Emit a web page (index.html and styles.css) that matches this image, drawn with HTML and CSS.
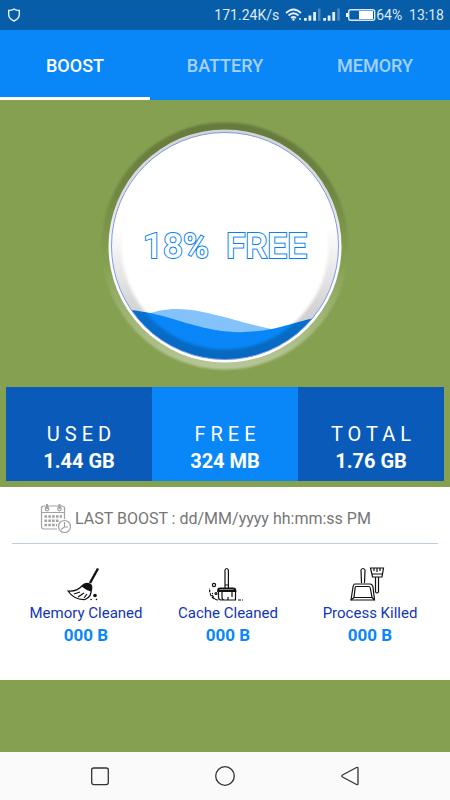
FILE: index.html
```html
<!DOCTYPE html>
<html lang="en">
<head>
<meta charset="utf-8">
<meta name="viewport" content="width=device-width, initial-scale=1">
<title>Boost</title>
<link rel="stylesheet" href="styles.css">
</head>
<body>
<header class="status">
  <svg class="shield" viewBox="0 0 14 14" aria-hidden="true"><path d="M7 1Q9.500 2.600 12.300 2.400V7Q12 10.800 7 13Q2 10.800 1.700 7V2.400Q4.500 2.600 7 1Z"/></svg>
  <span class="speed">171.24K/s</span>
  <svg class="signals" viewBox="0 0 56 16" aria-hidden="true">
    <g class="wifi"><path d="M1 6Q8.500-1 16 6M3.500 8.500Q8.500 4 13.500 8.500M6 11Q8.500 9 11 11"/><circle cx="8.500" cy="12.500" r="1.200"/><circle cx="15" cy="12" r="1"/></g>
    <g class="bars"><path d="M19 11h2.800v2.800h-2.800zM23.500 8.500h2.800v5.300h-2.800zM28.200 5h2.800v8.800h-2.800zM38.200 11h2.800v2.800h-2.800zM42.700 8.500h2.800v5.300h-2.800zM47.300 5h2.800v8.800h-2.800z"/><path class="dim" d="M33 1.500h2.500v12.300h-2.500zM52.300 1.500h2.500v12.300h-2.500z"/></g>
  </svg>
  <svg class="battery" viewBox="0 0 31 16" aria-hidden="true"><rect class="case" x="3.700" y="2.700" width="26" height="10.600" rx="2"/><path class="fill" d="M1 6h2v4H1zM14 4h14v8H14z"/></svg>
  <span class="time">64%&nbsp; 13:18</span>
</header>
<nav class="tabs">
  <button class="tab active" type="button">BOOST</button>
  <button class="tab" type="button">BATTERY</button>
  <button class="tab" type="button">MEMORY</button>
</nav>
<main>
  <section class="gauge">
    <svg viewBox="0 0 250 250" role="img" aria-label="18% free">
      <defs>
        <linearGradient id="halo" x1="0" y1="0" x2="0" y2="1">
          <stop offset="0" stop-color="#000" stop-opacity=".24"/><stop offset=".25" stop-color="#000" stop-opacity=".17"/><stop offset=".55" stop-color="#000" stop-opacity="0"/><stop offset=".56" stop-color="#fff" stop-opacity="0"/><stop offset="1" stop-color="#fff" stop-opacity=".42"/>
        </linearGradient>
        <linearGradient id="rim" x1="0" y1="0" x2="0" y2="1">
          <stop offset="0" stop-color="#d4d4d4"/><stop offset=".3" stop-color="#dedede"/><stop offset=".55" stop-color="#fff"/>
        </linearGradient>
        <linearGradient id="shade" x1="0" y1="0" x2="0" y2="1">
          <stop offset=".42" stop-color="#000" stop-opacity="0"/><stop offset=".78" stop-color="#000" stop-opacity=".17"/><stop offset="1" stop-color="#000" stop-opacity=".23"/>
        </linearGradient>
        <filter id="soft"><feGaussianBlur stdDeviation="1"/></filter>
        <filter id="inner"><feGaussianBlur stdDeviation="1.500"/></filter>
        <clipPath id="disc"><circle cx="125" cy="125" r="113.500"/></clipPath>
      </defs>
      <circle cx="125" cy="125" r="123.500" fill="url(#halo)" filter="url(#soft)"/>
      <circle cx="125" cy="125" r="116.500" fill="url(#rim)"/>
      <circle cx="125" cy="125" r="113.500" fill="#fff"/>
      <g clip-path="url(#disc)">
        <path fill="#84c2fb" d="M40 196C72 182 96 189 128 197Q155 205 180 210L160 225H60Z"/>
        <path fill="#0987f8" d="M5 188C45 187 68 197 90 203C118 211 140 214 172 208C190 204 205 198 245 190V250H5Z"/>
        <circle cx="125" cy="125" r="111" fill="none" stroke="url(#shade)" stroke-width="15" filter="url(#inner)"/>
      </g>
      <circle class="line" cx="125" cy="125" r="113.500"/>
      <text class="percent" x="125" y="137">18%  FREE</text>
    </svg>
  </section>
  <section class="stats">
    <div class="stat"><span>USED</span><strong>1.44 GB</strong></div>
    <div class="stat free"><span>FREE</span><strong>324 MB</strong></div>
    <div class="stat"><span>TOTAL</span><strong>1.76 GB</strong></div>
  </section>
  <section class="report">
    <div class="last">
      <svg class="calendar" viewBox="0 0 32 32" aria-hidden="true">
        <path d="M17 26H4Q1.500 26 1.500 23.500V5Q1.500 3 4 3H22Q24.500 3 24.500 5V16M1.500 9.500H24.500"/>
        <path class="ring" d="M7 1V6M19.500 1V6"/><circle cx="7" cy="6" r="1.800"/><circle cx="19.500" cy="6" r="1.800"/>
        <path class="days" d="M4.500 13.500H22M4.500 17.800H18.500M4.500 22H17"/>
        <circle cx="24.500" cy="23.500" r="6"/><path d="M24.500 19V24L21 26.500M24.500 24H28"/>
      </svg>
      <span>LAST BOOST : dd/MM/yyyy hh:mm:ss PM</span>
    </div>
    <div class="items">
      <div class="item">
        <svg viewBox="0 0 36 36" aria-hidden="true">
          <path class="handle" d="M33 2.500L25 17"/><path class="solid" d="M17 20Q20 16 25 18Q28 20 26 25Q22 24 17 20Z"/>
          <path d="M18 19Q12 26 3 25Q9 34 20 33.500Q27 31 26 23M9 28L15 26M13 31L19 27M19 32L22 28"/>
          <circle class="dust" cx="30" cy="29.500" r="1.800"/><circle class="dust" cx="26" cy="33.500" r=".8"/><circle class="dust" cx="31.500" cy="33.500" r=".8"/>
        </svg>
        <span>Memory Cleaned</span><strong>000 B</strong>
      </div>
      <div class="item">
        <svg viewBox="0 0 36 36" aria-hidden="true">
          <path d="M18 22V4Q19.700 1 21.400 4V22M18 19H21.400"/><path class="edge" d="M11 25Q11 22.500 13 22.500H26Q28.500 22.500 28.500 25Z"/>
          <path d="M11.500 25V31Q11.500 34 14 34H28.500V25M15 26V31Q15 34 17 34M25 26V31M21 31V34"/><path d="M11 34Q2.500 33 2.500 22M5 29L8 33M31 34H36" stroke-dasharray="3 1"/>
          <circle cx="7" cy="19" r="1.600"/><circle cx="9" cy="27.500" r="1"/><circle class="dust" cx="5.500" cy="27.500" r=".7"/>
        </svg>
        <span>Cache Cleaned</span><strong>000 B</strong>
      </div>
      <div class="item">
        <svg viewBox="0 0 36 36" aria-hidden="true">
          <path d="M12.500 17L12 4Q14 1 16 4L15.500 17"/><path d="M6 18H21Q23.500 18 24 21L25.500 34H2L4 21Q4.500 18 6 18Z"/><path d="M7 20.500H20Q21 20.500 21.500 23L23 31.500H5L6 23Q6 20.500 7 20.500ZM2 34L5 31.500M25.500 34L23 31.500"/>
          <path d="M21.500 2H34.500L33 11H23.500ZM23 8H33.500M25 2V5M28 2V6M31 2V5M26.500 11V26Q28 28 29.500 26V11"/>
        </svg>
        <span>Process Killed</span><strong>000 B</strong>
      </div>
    </div>
  </section>
</main>
<footer class="softkeys">
  <button type="button" aria-label="Recent apps"><svg viewBox="0 0 24 24"><rect x="3.700" y="4" width="16.600" height="16.600" rx="2"/></svg></button>
  <button type="button" aria-label="Home"><svg viewBox="0 0 24 24"><circle cx="12" cy="12" r="9.300"/></svg></button>
  <button type="button" aria-label="Back"><svg viewBox="0 0 24 24"><path d="M18.500 3.500Q20 3 20 4.500V19.500Q20 21 18.500 20.500L4.500 13Q3 12 4.500 11Z"/></svg></button>
</footer>
</body>
</html>
```

FILE: styles.css
```css
* { box-sizing: border-box; }
body {
  margin: 0;
  min-height: 100vh;
  display: flex;
  flex-direction: column;
  background: #85a050;
  font-family: Roboto, "Liberation Sans", sans-serif;
}
button { border: 0; padding: 0; background: none; font: inherit; }
svg { display: block; }
.status {
  height: 30px;
  display: flex;
  align-items: center;
  padding: 0 6px 0 7px;
  background: #075da8;
  color: #dce9f7;
  font-size: 14px;
}
.shield { width: 14px; height: 14px; fill: none; stroke: #eaf3fc; stroke-width: 1.400; }
.speed { margin-left: auto; }
.signals { width: 56px; height: 16px; margin-left: 6px; fill: #e4eefa; }
.wifi path { fill: none; stroke: #e4eefa; stroke-width: 1.800; }
.bars .dim { fill: #4c8bc3; }
.battery { width: 31px; height: 16px; margin-left: 4px; }
.battery .case { fill: none; stroke: #dce6f8; stroke-width: 1.400; }
.battery .fill { fill: #fff; }
.tabs { height: 70px; display: grid; grid-template-columns: repeat(3, 1fr); background: #0987f8; }
.tab {
  border-top: 3px solid transparent;
  border-bottom: 3px solid transparent;
  color: #a6d1fb;
  font-size: 18px;
  font-weight: 500;
}
.tab.active { color: #fff; border-bottom-color: #fff; }
main { flex: 1; }
.gauge { padding: 21px 0 16px; }
.gauge svg { width: 250px; margin: 0 auto; }
.line { fill: none; stroke: #7d9bea; stroke-width: 1; }
.percent {
  fill: #fff;
  stroke: #0b80f6;
  stroke-width: 2;
  paint-order: stroke;
  font-size: 35px;
  font-weight: 500;
  text-anchor: middle;
  white-space: pre;
}
.stats { display: grid; grid-template-columns: repeat(3, 1fr); margin: 0 6px 6px; }
.stat {
  display: flex;
  flex-direction: column;
  align-items: center;
  height: 94px;
  padding-top: 34px;
  background: #0a5bb9;
  color: #fff;
  font-size: 20px;
  line-height: 27px;
}
.stat span { padding-left: 5px; letter-spacing: 5px; }
.stat.free { background: #0987f8; }
.report { padding: 0 12px; height: 193px; background: #fff; }
.last {
  height: 57px;
  display: flex;
  align-items: center;
  gap: 3px;
  padding: 7px 0 0 28px;
  border-bottom: 1px solid #bfcbea;
  color: #767676;
  font-size: 16px;
}
.calendar { width: 32px; height: 32px; fill: none; stroke: #a2a2a2; stroke-width: 1.200; }
.calendar .ring { stroke-width: 2; }
.calendar .days { stroke-width: 2.600; stroke-dasharray: 2.600 1.200; }
.items { display: grid; grid-template-columns: repeat(3, 1fr); padding-top: 22px; }
.item {
  display: flex;
  flex-direction: column;
  align-items: center;
  color: #1236b5;
  font-size: 15px;
  line-height: 22px;
}
.item svg { width: 36px; height: 36px; fill: none; stroke: #111; stroke-width: 1.200; }
.item .handle { stroke-width: 2.400; }
.item .edge { stroke-width: 1.800; }
.item .solid { fill: #111; }
.item .dust { fill: #111; stroke: none; }
.item span, .item strong { padding-left: 6px; }
.item strong { color: #0987f8; font-size: 17px; }
.softkeys {
  height: 48px;
  display: flex;
  justify-content: space-around;
  align-items: center;
  padding: 0 37px;
  background: #fafafa;
}
.softkeys svg { width: 24px; height: 24px; fill: none; stroke: #333; stroke-width: 1.300; }
```
